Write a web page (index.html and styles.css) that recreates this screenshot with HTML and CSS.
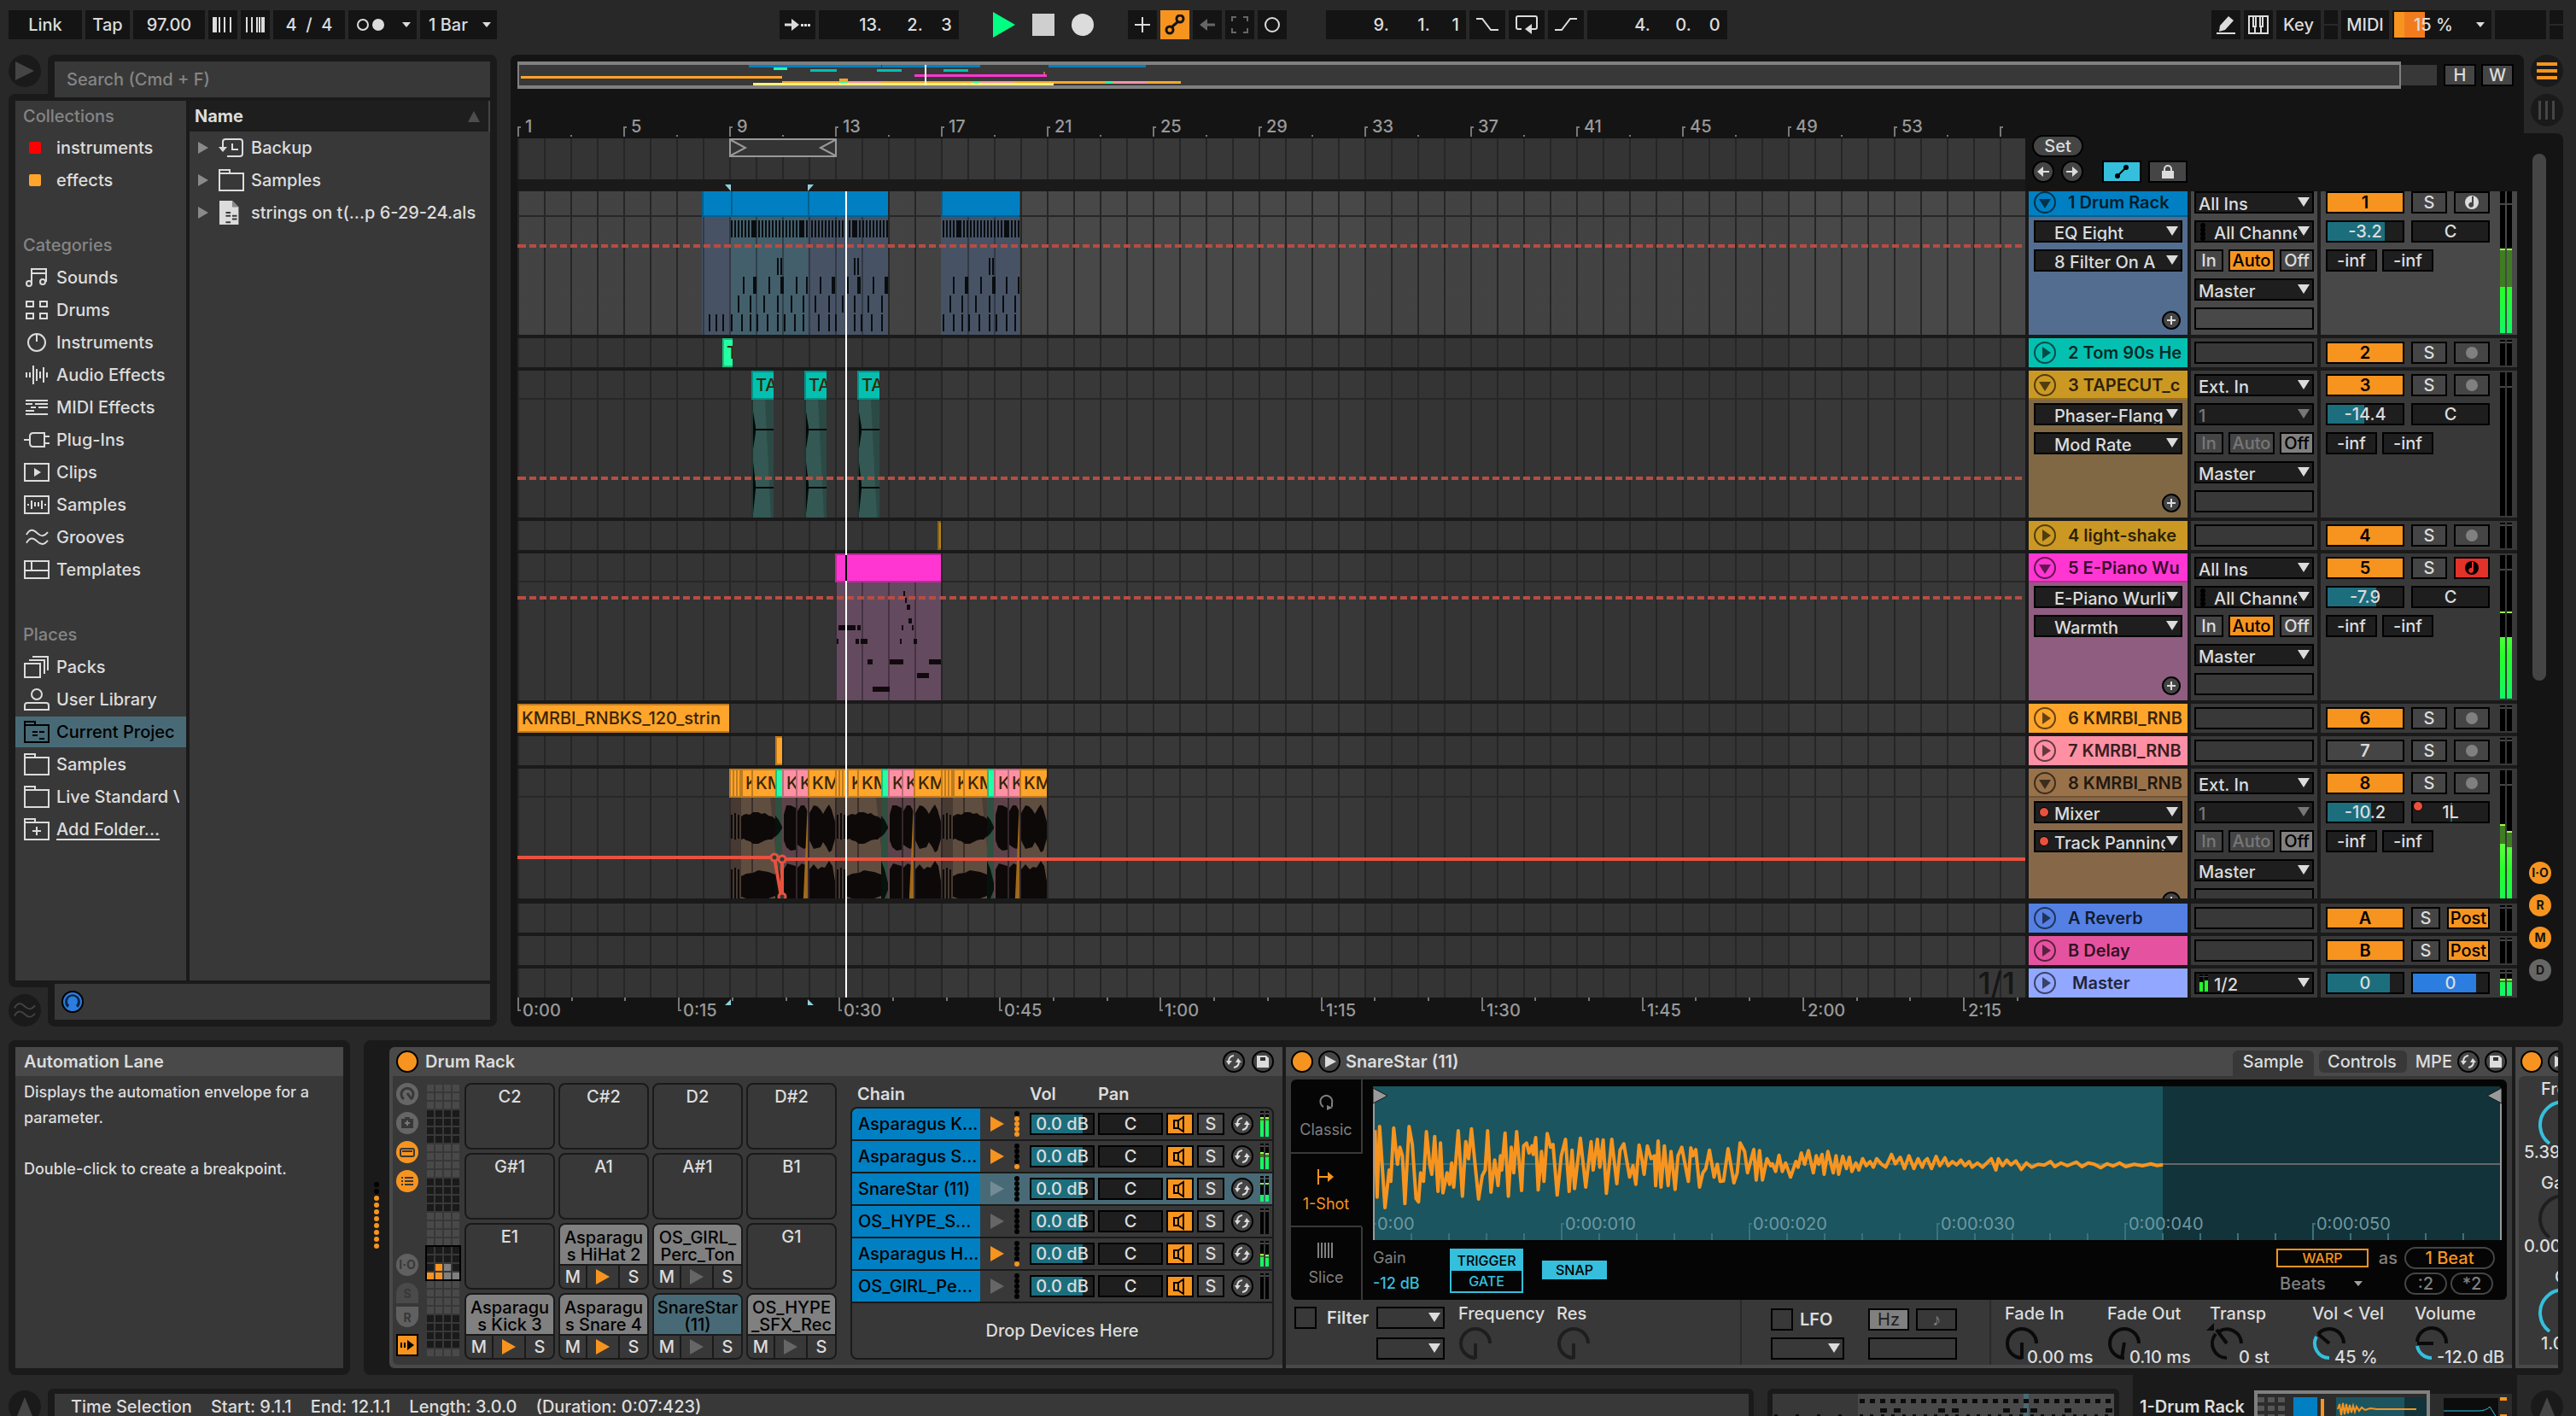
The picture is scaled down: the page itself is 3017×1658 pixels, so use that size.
FILE: index.html
```html
<!DOCTYPE html>
<html lang="en">
<head>
<meta charset="utf-8">
<title>Live Set</title>
<link rel="stylesheet" href="styles.css">
</head>
<body>
<svg class="defs" aria-hidden="true">
  <symbol id="i-folder" viewBox="0 0 30 26"><path d="M1 5V1h12v4M1 5h28v20H1z" fill="none" stroke="currentColor" stroke-width="2"/></symbol>
  <symbol id="i-swap" viewBox="0 0 26 26"><circle cx="13" cy="13" r="12" fill="#454545" stroke="#000" stroke-width="2"/><path d="M13 6a7 7 0 0 0-6 6M13 20a7 7 0 0 0 6-6" fill="none" stroke="#dcdcdc" stroke-width="2"/><path d="M4 12h7l-4 5zM15 14h7l-4-5z" fill="#dcdcdc"/></symbol>
  <symbol id="i-save" viewBox="0 0 26 26"><circle cx="13" cy="13" r="12" fill="#454545" stroke="#000" stroke-width="2"/><path d="M6 6h11l3 3v11H6z" fill="#dcdcdc"/><path d="M10 8h6v4h-6z" fill="#333"/></symbol>
  <symbol id="i-speaker" viewBox="0 0 28 22"><path d="M7 7h5v9H7zM12 7l6-4v17l-6-4" fill="none" stroke="#000" stroke-width="2"/></symbol>
  <symbol id="i-play" viewBox="0 0 16 18"><path d="M0 0l16 9-16 9z" fill="currentColor"/></symbol>
  <symbol id="i-fold" viewBox="0 0 26 26"><circle cx="13" cy="13" r="12" fill="none" stroke="currentColor" stroke-width="2"/><path d="M6 9h14l-7 11z" fill="currentColor"/></symbol>
  <symbol id="i-unfold" viewBox="0 0 26 26"><circle cx="13" cy="13" r="12" fill="none" stroke="currentColor" stroke-width="2"/><path d="M10 6v14l10-7z" fill="currentColor"/></symbol>
  <symbol id="i-note" viewBox="0 0 18 18"><circle cx="9" cy="9" r="8" fill="currentColor"/><path d="M11 2v9a3 3 0 1 1-2-2V2z" fill="var(--hole)"/></symbol>
  <symbol id="i-plus" viewBox="0 0 22 22"><circle cx="11" cy="11" r="10" fill="#454545" stroke="#000" stroke-width="2"/><path d="M11 6v10M6 11h10" stroke="#dcdcdc" stroke-width="2"/></symbol>
  <symbol id="i-waves" viewBox="0 0 28 20"><path d="M1 7c4-7 8-7 13-2s9 4 13-1M1 17c4-7 8-7 13-2s9 4 13-1" fill="none" stroke="currentColor" stroke-width="2"/></symbol>
</svg>

<div class="app">
  <header class="topbar">
    <div class="bar-group">
      <button class="tb w86">Link</button>
      <button class="tb w52">Tap</button>
      <button class="tb w84">97.00</button>
      <button class="tb w34" aria-label="Nudge down"><svg width="24" height="18"><path d="M0 0h5v18H0zM7 0h2v18H7zM13 0h2v18h-2zM20 0h2v18h-2z" fill="#dcdcdc"/></svg></button>
      <button class="tb w34" aria-label="Nudge up"><svg width="24" height="18"><path d="M1 0h2v18H1zM7 0h2v18H7zM13 0h2v18h-2zM16 0h2v18h-2zM19 0h4v18h-4z" fill="#dcdcdc"/></svg></button>
      <button class="tb w84 pre">4  /  4</button>
      <button class="tb w80 spread" aria-label="Metronome"><svg width="34" height="16"><circle cx="7" cy="8" r="6" fill="none" stroke="#dcdcdc" stroke-width="2"/><circle cx="25" cy="8" r="7" fill="#dcdcdc"/></svg><i class="caret"></i></button>
      <button class="tb w90 spread">1 Bar<i class="caret"></i></button>
    </div>
    <div class="space-l"></div>
    <div class="bar-group">
      <button class="tb w42" aria-label="Follow"><svg width="32" height="16"><path d="M1 8h9" stroke="#dcdcdc" stroke-width="3"/><path d="M9 1l9 7-9 7z" fill="#dcdcdc"/><path d="M20 7h3v3h-3zM24 7h3v3h-3zM28 7h3v3h-3z" fill="#dcdcdc"/></svg></button>
      <div class="tb w164 pos"><span>13.</span><span>2.</span><span>3</span></div>
      <div class="transport">
        <button class="bare" aria-label="Play"><svg width="26" height="30"><path d="M0 0l26 15L0 30z" fill="#00ff82"/></svg></button>
        <button class="bare" aria-label="Stop"><svg width="26" height="26"><path d="M0 0h26v26H0z" fill="#cfcfcf"/></svg></button>
        <button class="bare" aria-label="Record"><svg width="26" height="26"><circle cx="13" cy="13" r="13" fill="#dcdcdc"/></svg></button>
      </div>
      <button class="tb w34" aria-label="Overdub"><svg width="18" height="18"><path d="M9 0v18M0 9h18" stroke="#dcdcdc" stroke-width="2"/></svg></button>
      <button class="tb w34 on" aria-label="Automation arm"><svg width="24" height="24"><g fill="none" stroke="#141414" stroke-width="3"><circle cx="6" cy="18" r="4"/><circle cx="18" cy="5" r="4"/><path d="M8 15l8-7"/></g></svg></button>
      <button class="tb w34" aria-label="Re-enable automation"><svg width="18" height="16"><path d="M18 8H8" stroke="#666" stroke-width="3"/><path d="M9 1L0 8l9 7z" fill="#666"/></svg></button>
      <button class="tb w34" aria-label="Capture MIDI"><svg width="20" height="20"><path d="M1 6V1h5M14 1h5v5M19 14v5h-5M6 19H1v-5" fill="none" stroke="#666" stroke-width="2"/></svg></button>
      <button class="tb w34" aria-label="Session record"><svg width="20" height="20"><circle cx="10" cy="10" r="8" fill="none" stroke="#dcdcdc" stroke-width="2"/></svg></button>
      <div class="tb w164 pos loop-start"><span>9.</span><span>1.</span><span>1</span></div>
      <button class="tb w42" aria-label="Punch in"><svg width="28" height="16"><path d="M1 1h7l10 13h9" fill="none" stroke="#dcdcdc" stroke-width="2"/></svg></button>
      <button class="tb w42" aria-label="Loop"><svg width="28" height="24"><path d="M8 17H4q-2 0-2-2V4q0-2 2-2h20q2 0 2 2v11q0 2-2 2h-7" fill="none" stroke="#dcdcdc" stroke-width="2"/><path d="M20 11v12l-8-6z" fill="#dcdcdc"/></svg></button>
      <button class="tb w42" aria-label="Punch out"><svg width="28" height="16"><path d="M1 14h8L19 1h8" fill="none" stroke="#dcdcdc" stroke-width="2"/></svg></button>
      <div class="tb w164 pos"><span>4.</span><span>0.</span><span>0</span></div>
    </div>
    <div class="space-r"></div>
    <div class="bar-group">
      <button class="tb w34" aria-label="Draw mode"><svg width="24" height="24"><path d="M5 13L15 2l6 5-10 11-7 2zM1 21h22v2H1z" fill="#dcdcdc"/></svg></button>
      <button class="tb w34" aria-label="Computer keyboard"><svg width="24" height="22"><path d="M1 1h22v20H1zM8 12v9M15 12v9M6 1h3v12H6zM14 1h3v12h-3z" fill="none" stroke="#dcdcdc" stroke-width="2"/></svg></button>
      <button class="tb w52">Key</button>
      <div class="stack"><i></i><i></i></div>
      <button class="tb w56">MIDI</button>
      <div class="tb w116 cpu"><i class="cpu-fill"></i><span>15 %</span><i class="caret"></i></div>
      <div class="tb w60"></div>
      <div class="stack"><i></i><i></i></div>
    </div>
  </header>

  <main class="workspace">
    <aside class="browser">
      <div class="browser-top">
        <button class="round" aria-label="Preview"><svg width="22" height="22"><path d="M0 0l22 11L0 22z" fill="#454545"/></svg></button>
        <div class="search-wrap"><input class="search" type="text" aria-label="Search" placeholder="Search (Cmd + F)"></div>
      </div>
      <div class="browser-main">
        <nav class="sidebar">
          <h2>Collections</h2>
          <ul>
            <li><i class="swatch red"></i>instruments</li>
            <li><i class="swatch amber"></i>effects</li>
          </ul>
          <h2>Categories</h2>
          <ul>
            <li><svg viewBox="0 0 30 26"><g fill="none" stroke="currentColor" stroke-width="2"><circle cx="6" cy="20" r="3"/><circle cx="22" cy="18" r="3"/><path d="M9 20V3h17v15M9 8h17"/></g></svg>Sounds</li>
            <li><svg viewBox="0 0 30 26"><path d="M3 3h8v6H3zM19 3h8v6h-8zM3 17h8v6H3zM19 17h8v6h-8z" fill="none" stroke="currentColor" stroke-width="2"/></svg>Drums</li>
            <li><svg viewBox="0 0 30 26"><path d="M15 3v9" stroke="currentColor" stroke-width="2"/><circle cx="15" cy="13" r="10" fill="none" stroke="currentColor" stroke-width="2"/></svg>Instruments</li>
            <li><svg viewBox="0 0 30 26"><path d="M3 10v6M7 10v6M11 2v22M15 6v14M19 9v8M23 4v18M27 10v6" stroke="currentColor" stroke-width="2"/></svg>Audio Effects</li>
            <li><svg viewBox="0 0 30 26"><path d="M2 5h26M2 9h8M13 9h15M8 13h6M17 13h11M2 17h10M2 21h26" stroke="currentColor" stroke-width="2"/></svg>MIDI Effects</li>
            <li><svg viewBox="0 0 30 26"><path d="M0 13h7M24 9h6M24 17h6M24 5v16H11q-4 0-4-4V9q0-4 4-4z" fill="none" stroke="currentColor" stroke-width="2"/></svg>Plug-Ins</li>
            <li><svg viewBox="0 0 30 26"><path d="M1 3h28v20H1z" fill="none" stroke="currentColor" stroke-width="2"/><path d="M12 8l8 5-8 5z" fill="currentColor"/></svg>Clips</li>
            <li><svg viewBox="0 0 30 26"><path d="M1 3h28v20H1zM5 12v2M9 8v10M13 10v5M17 10v5M21 8v10M25 12v2" fill="none" stroke="currentColor" stroke-width="2"/></svg>Samples</li>
            <li><svg viewBox="0 0 30 26"><use href="#i-waves" x="2" y="3" width="27" height="20"/></svg>Grooves</li>
            <li><svg viewBox="0 0 30 26"><path d="M1 3h28v20H1zM1 14h28M9 3v11" fill="none" stroke="currentColor" stroke-width="2"/></svg>Templates</li>
          </ul>
          <h2>Places</h2>
          <ul>
            <li><svg viewBox="0 0 30 26"><path d="M1 9h18v16H1zM6 5h18v16M10 1h18v16" fill="none" stroke="currentColor" stroke-width="2"/></svg>Packs</li>
            <li><svg viewBox="0 0 30 26"><circle cx="15" cy="7" r="6" fill="none" stroke="currentColor" stroke-width="2"/><path d="M1 25v-5q0-3 3-3h22q3 0 3 3v5z" fill="none" stroke="currentColor" stroke-width="2"/></svg>User Library</li>
            <li class="current"><svg viewBox="0 0 30 26"><use href="#i-folder" width="30" height="26"/><path d="M10 13h6M18 13h6M10 17h6M18 21h6" stroke="currentColor" stroke-width="2"/></svg>Current Projec</li>
            <li><svg viewBox="0 0 30 26"><use href="#i-folder" width="30" height="26"/></svg>Samples</li>
            <li><svg viewBox="0 0 30 26"><use href="#i-folder" width="30" height="26"/></svg>Live Standard V</li>
            <li><svg viewBox="0 0 30 26"><use href="#i-folder" width="30" height="26"/><path d="M15 10v10M10 15h10" stroke="currentColor" stroke-width="2"/></svg><a href="#add">Add Folder...</a></li>
          </ul>
        </nav>
        <section class="files">
          <div class="files-head">Name<svg width="14" height="13"><path d="M7 0l7 13H0z" fill="#4d4d4d"/></svg></div>
          <ul>
            <li><svg class="tri" viewBox="0 0 12 14"><path d="M0 0l12 7-12 7z" fill="#8a8a8a"/></svg><svg class="ico" viewBox="0 0 30 26"><path d="M5 12V6q0-3 3-3h17q3 0 3 3v14q0 3-3 3H10M16 8v7h7" fill="none" stroke="currentColor" stroke-width="2"/><path d="M0 12h10l-5 6z" fill="currentColor"/></svg>Backup</li>
            <li><svg class="tri" viewBox="0 0 12 14"><path d="M0 0l12 7-12 7z" fill="#8a8a8a"/></svg><svg class="ico" viewBox="0 0 30 26"><use href="#i-folder" width="30" height="26"/></svg>Samples</li>
            <li><svg class="tri" viewBox="0 0 12 14"><path d="M0 0l12 7-12 7z" fill="#8a8a8a"/></svg><svg class="ico" viewBox="0 0 30 30"><path d="M0 0h16l8 8v22H0z" fill="#dcdcdc"/><path d="M16 0v8h8z" fill="#888"/><path d="M8 15h6M8 19h6M16 19h6M16 23h6M8 27h6" stroke="#383838" stroke-width="2"/></svg>strings on t(...p 6-29-24.als</li>
          </ul>
        </section>
      </div>
      <div class="browser-foot">
        <button class="round" aria-label="Groove pool"><svg width="26" height="20"><use href="#i-waves" width="26" height="20" color="#454545"/></svg></button>
        <div class="preview-wrap"><div class="preview"><svg width="26" height="26"><circle cx="13" cy="13" r="13" fill="#000"/><circle cx="13" cy="13" r="11" fill="#2b7de0"/><path d="M7 20a9 9 0 1 1 12 0l-2-3a6 6 0 1 0-8 0z" fill="#0b2746"/><path d="M11 24v-8H8q-1-7 5-7t5 7h-3v8z" fill="#2b7de0"/></svg></div></div>
      </div>
    </aside>

    <section class="arrange">
      <div class="arrange-body">
        <div class="overview-row">
          <div class="overview">
            <svg width="100%" height="24" id="overview"></svg>
          </div>
          <div class="overview-rest"></div>
          <button class="hw">H</button>
          <button class="hw">W</button>
        </div>
        <div class="ruler-row">
          <div class="ruler-area">
            <svg class="ruler" width="100%" height="56" id="ruler"></svg>
            <div class="scrub grid-lines"><svg class="loop" width="126" height="22"><path d="M1 1h124v20H1z" fill="#343434" stroke="#999" stroke-width="2"/><path d="M2 2l17 9-17 9M124 2l-17 9 17 9" fill="none" stroke="#999" stroke-width="2"/></svg></div>
            <svg class="marks" width="100%" height="14"><path d="M243 6h7v8zM340 6h7l-7 8z" fill="#8fd0dc"/></svg>
          </div>
          <div class="locators">
            <button class="pill">Set</button>
            <div class="loc-row">
              <button class="dot" aria-label="Previous locator"><svg width="26" height="26"><circle cx="13" cy="13" r="12" fill="#454545" stroke="#000" stroke-width="2"/><path d="M20 12v2h-7v5l-7-6 7-6v5z" fill="#dcdcdc"/></svg></button>
              <button class="dot" aria-label="Next locator"><svg width="26" height="26"><circle cx="13" cy="13" r="12" fill="#454545" stroke="#000" stroke-width="2"/><path d="M6 12v2h7v5l7-6-7-6v5z" fill="#dcdcdc"/></svg></button>
              <button class="sq cyan" aria-label="Automation mode"><svg width="18" height="18"><path d="M3 15L15 3" stroke="#000" stroke-width="2"/><circle cx="4" cy="14" r="3"/><circle cx="14" cy="4" r="3"/></svg></button>
              <button class="sq" aria-label="Lock envelopes"><svg width="16" height="16"><path d="M1 7h14v9H1z" fill="#dcdcdc"/><path d="M4 8V5a4 4 0 0 1 8 0v3" fill="none" stroke="#dcdcdc" stroke-width="2"/></svg></button>
            </div>
          </div>
        </div>
        <div class="tracks tracks-scroll" id="tracks"></div>
        <div class="tracks tracks-fixed" id="returns"></div>
        <svg class="time-ruler" width="100%" height="34" id="times"></svg>
        <div class="playhead"></div>
      </div>
      <div class="side">
        <div class="view-switch">
          <button class="round" aria-label="Arrangement view"><svg width="24" height="22"><path d="M0 1h24v4H0zM0 9h24v4H0zM0 17h24v4H0z" fill="#f7941f"/></svg></button>
          <button class="round" aria-label="Session view"><svg width="20" height="22"><path d="M0 0h3v22H0zM8 0h3v22H8zM16 0h3v22h-3z" fill="#454545"/></svg></button>
        </div>
        <div class="side-panel">
          <div class="scrollbar"></div>
          <button class="mini">I·O</button><button class="mini">R</button><button class="mini">M</button><button class="mini off">D</button>
        </div>
      </div>
    </section>
  </main>

  <section class="lower">
    <aside class="info">
      <h2>Automation Lane</h2>
      <div class="info-body">
        <p>Displays the automation envelope for a parameter.</p>
        <p>Double-click to create a breakpoint.</p>
      </div>
    </aside>
    <div class="rack">
      <svg class="rack-dots" width="6" height="80" id="rackdots"></svg>
      <article class="device drum">
        <header class="dev-head"><button class="power" aria-label="Device on"></button><h3>Drum Rack</h3><span class="grow"></span><svg width="26" height="26"><use href="#i-swap"/></svg><svg width="26" height="26"><use href="#i-save"/></svg></header>
        <div class="dev-body drum-body">
          <div class="rack-tools">
            <svg width="26" height="26"><circle cx="13" cy="13" r="13" fill="#666"/><path d="M9 19a7 7 0 1 1 8 0M13 12l5 7" fill="none" stroke="#383838" stroke-width="3"/></svg>
            <svg width="26" height="26"><circle cx="13" cy="13" r="13" fill="#666"/><path d="M6 8h4V6h6v2h4v11H6z" fill="#383838"/><path d="M13 10v6M10 13h6" stroke="#777" stroke-width="2"/></svg>
            <svg width="26" height="26"><circle cx="13" cy="13" r="13" fill="#f7941f"/><rect x="5" y="9" width="16" height="9" rx="2" fill="none" stroke="#383838" stroke-width="2"/><path d="M7 12h12" stroke="#383838" stroke-width="2"/></svg>
            <svg width="26" height="26"><circle cx="13" cy="13" r="13" fill="#f7941f"/><path d="M6 9h2M10 9h10M6 13h2M10 13h10M6 17h2M10 17h10" stroke="#383838" stroke-width="2"/></svg>
            <span class="grow"></span>
            <button class="tool">I·O</button>
            <button class="tool half-t">S</button>
            <button class="tool half-b">R</button>
            <svg width="26" height="26"><path d="M1 1h24v24H1z" fill="#f7941f" stroke="#000" stroke-width="2"/><path d="M5 10h2v6H5zM9 10h2v6H9zM13 7l8 6-8 6z"/></svg>
          </div>
          <svg class="padmap" width="42" height="324" id="padmap"></svg>
          <div class="pads" id="pads"></div>
          <div class="chains">
            <div class="chain-labels"><span>Chain</span><span>Vol</span><span>Pan</span></div>
            <div class="chain-box"><div id="chains"></div><div class="drop">Drop Devices Here</div></div>
          </div>
        </div>
      </article>
      <article class="device sampler">
        <header class="dev-head"><button class="power" aria-label="Device on"></button><svg width="26" height="26"><circle cx="13" cy="13" r="12" fill="#454545" stroke="#000" stroke-width="2"/><path d="M8 6l13 7-13 7z" fill="#dcdcdc"/></svg><h3>SnareStar (11)</h3><span class="grow"></span><button class="tab active">Sample</button><button class="tab">Controls</button><span class="mpe">MPE</span><svg width="26" height="26"><use href="#i-swap"/></svg><svg width="26" height="26"><use href="#i-save"/></svg></header>
        <div class="dev-body sampler-body">
          <div class="display">
            <div class="modes">
              <button><svg width="20" height="20"><path d="M7 15a7 7 0 1 1 10-4v4" fill="none" stroke="currentColor" stroke-width="2"/><path d="M11 13v6l7-3z" fill="currentColor"/></svg>Classic</button>
              <button class="sel"><svg width="20" height="20"><path d="M1 1v18M1 10h14" stroke="currentColor" stroke-width="2"/><path d="M12 4v12l7-6z" fill="currentColor"/></svg>1-Shot</button>
              <button><svg width="20" height="20"><path d="M1 1v18M5 1v18M9 1v18M13 1v18M17 1v18" stroke="currentColor" stroke-width="2"/></svg>Slice</button>
            </div>
            <div class="display-area">
              <svg class="wave" width="100%" height="180" id="wave"></svg>
              <div class="display-ctl">
                <div class="gain"><span>Gain</span><b>-12 dB</b></div>
                <div class="toggle2"><button class="lit">TRIGGER</button><button>GATE</button></div>
                <button class="snap">SNAP</button>
                <span class="grow"></span>
                <div class="warp">
                  <button class="warp-btn">WARP</button><span>as</span><button class="beat">1 Beat</button>
                  <button class="beats">Beats<i class="caret"></i></button><span></span><div class="halves"><button>:2</button><button>*2</button></div>
                </div>
              </div>
            </div>
          </div>
          <div class="params">
            <label class="check"><input type="checkbox"><span>Filter</span></label>
            <div class="two"><div class="pick"><select aria-label="Filter type"><option></option></select></div><div class="pick"><select aria-label="Filter slope"><option></option></select></div></div>
            <div class="knob-col"><span>Frequency</span><svg width="40" height="40"><path d="M20 37A17 17 0 1 1 37 20M20 20v18" class="kd"/></svg></div>
            <div class="knob-col"><span>Res</span><svg width="40" height="40"><path d="M20 37A17 17 0 1 1 37 20M20 20v18" class="kd"/></svg></div>
            <span class="grow"></span>
            <div class="lfo">
              <div class="lfo-a"><label class="check"><input type="checkbox"><span>LFO</span></label><div class="pick"><select aria-label="LFO shape"><option></option></select></div></div>
              <div class="lfo-b"><div class="hz"><button class="lit">Hz</button><button>♪</button></div><div class="blank"></div></div>
            </div>
            <div class="knobs">
              <div class="knob-col"><span>Fade In</span><svg width="40" height="40"><path d="M20 37A17 17 0 1 1 37 20M20 19v19" class="ko"/></svg><em>0.00 ms</em></div>
              <div class="knob-col"><span>Fade Out</span><svg width="40" height="40"><path d="M20 37A17 17 0 1 1 37 20M20 19l-3 18" class="ko"/></svg><em>0.10 ms</em></div>
              <div class="knob-col shift"><span>Transp</span><svg width="40" height="40"><path d="M20 37A17 17 0 0 1 7 9M11 6A17 17 0 0 1 37 20M20 20L8 4" class="ko"/><path d="M-4 5l9-9v9z" class="kt"/></svg><em>0 st</em></div>
              <div class="knob-col"><span>Vol &lt; Vel</span><svg width="40" height="40"><path d="M7 9A17 17 0 0 1 37 20M20 20L7 9" class="ko"/><path d="M20 37A17 17 0 0 1 5 12" class="kc"/></svg><em>45 %</em></div>
              <div class="knob-col"><span>Volume</span><svg width="40" height="40"><path d="M3 18A17 17 0 0 1 37 20M22 20H3" class="ko"/><path d="M20 37A17 17 0 0 1 3 23" class="kc"/></svg><em>-12.0 dB</em></div>
            </div>
          </div>
        </div>
      </article>
      <article class="device third">
        <header class="dev-head"><button class="power" aria-label="Device on"></button><svg width="26" height="26"><circle cx="13" cy="13" r="12" fill="#454545" stroke="#000" stroke-width="2"/><path d="M8 6l13 7-13 7z" fill="#dcdcdc"/></svg></header>
        <div class="dev-body third-body">
          <span class="t1">Freq</span><svg width="60" height="56"><path d="M14 51A27 27 0 1 1 46 51" fill="none" stroke="#35bfdd" stroke-width="4"/></svg><span class="t2">5.39 kHz</span>
          <span class="t1">Gain</span><svg width="60" height="56"><path d="M14 51A27 27 0 1 1 46 51" fill="none" stroke="#1e1e1e" stroke-width="4"/></svg><span class="t2">0.00 dB</span>
          <span class="t3">Q</span><svg width="60" height="56"><path d="M14 51A27 27 0 1 1 46 51" fill="none" stroke="#35bfdd" stroke-width="4"/></svg><span class="t1">1.00</span>
        </div>
      </article>
    </div>
  </section>

  <footer class="status">
    <button class="round" aria-label="Toggle info view"><svg width="18" height="22"><path d="M9 0l9 22H0z" fill="#454545"/></svg></button>
    <div class="status-text"><div><span>Time Selection</span><span>Start: 9.1.1</span><span>End: 12.1.1</span><span>Length: 3.0.0</span><span>(Duration: 0:07:423)</span></div></div>
    <div class="clip-view"><svg width="100%" height="40" id="clipview"></svg></div>
    <div class="dev-view"><b>1-Drum Rack</b>
      <svg width="302" height="40"><path d="M0 4h302v36H0z" fill="#2c2c2c"/><path d="M46 8h28v32H46z" fill="#0080c2"/><path d="M96 8h108v28H96z" fill="#1c5560"/><path d="M176 8h28v28h-28z" fill="#12333a"/><path d="M98 22l2-6 2 13 2-14 2 13 2-12 2 11 2-10 2 9 2-8 2 7 2-6 3 5 3-4 4 3 6-2 8 1h46" fill="none" stroke="#f7941f" stroke-width="2"/><path d="M222 9h64v31h-64z" fill="#0c0c0c"/><path d="M222 24h40q10 0 14-5l8 13" fill="none" stroke="#35bfdd"/><g fill="#555"><path d="M4 8h8v6H4zM16 8h8v6h-8zM28 8h8v6h-8zM4 18h8v6H4zM16 18h8v6h-8zM28 18h8v6h-8zM4 28h8v6H4zM16 28h8v6h-8zM28 28h8v6h-8z"/></g><path d="M78 10h4v28h-4zM288 8h8v4h-8zM288 28h8v4h-8z" fill="#f7941f"/><path d="M2 50V2h202v48" fill="none" stroke="#808080" stroke-width="4"/></svg>
    </div>
    <button class="round" aria-label="Toggle device view"><svg width="18" height="22"><path d="M9 0l9 22H0z" fill="#454545"/></svg></button>
  </footer>
</div>
<script src="script.js"></script>
</body>
</html>
```

FILE: styles.css
```css
* { box-sizing: border-box; }
body {
  margin: 0;
  background: #282828;
  color: #dcdcdc;
  font: 500 20px/26px Inter, "Liberation Sans", sans-serif;
  overflow: hidden;
}
button, input, select { font: inherit; color: inherit; border: 0; padding: 0; margin: 0; background: none; border-radius: 0; }
h2, h3, ul, p { margin: 0; padding: 0; font-size: inherit; font-weight: inherit; list-style: none; }
svg { display: block; flex: none; }
i, em { font-style: normal; }
.defs { position: absolute; width: 0; height: 0; }
.grow { flex: 1; }
.pre { white-space: pre; }
.app { padding: 12px 15px 0 10px; height: 100vh; overflow: hidden; }

/* control bar */
.topbar { display: flex; height: 34px; }
.bar-group { display: flex; gap: 4px; }
.space-l { flex: 330; }
.space-r { flex: 566; }
.tb { height: 34px; background: #141414; display: flex; align-items: center; justify-content: center; flex: none; }
.w34 { width: 34px; } .w42 { width: 42px; } .w52 { width: 52px; } .w56 { width: 56px; } .w60 { width: 60px; }
.w80 { width: 80px; } .w84 { width: 84px; } .w86 { width: 86px; } .w90 { width: 90px; } .w116 { width: 116px; } .w164 { width: 164px; }
.tb.on { background: #f7941f; }
.spread { justify-content: space-between; padding: 0 7px 0 10px; }
.pos { justify-content: flex-end; padding-right: 8px; }
.pos span { width: 48px; text-align: right; }
.pos span:last-child { width: 34px; }
.loop-start { margin-left: 42px; }
.caret { width: 0; height: 0; border: 5px solid transparent; border-top: 6px solid #dcdcdc; border-bottom: 0; }
.transport { display: flex; align-items: center; gap: 20px; padding: 0 36px; }
.bare { display: flex; }
.stack { width: 16px; display: flex; flex-direction: column; gap: 2px; }
.stack i { flex: 1; background: #141414; }
.cpu { position: relative; justify-content: space-between; padding: 0 8px 0 25px; }
.cpu-fill { position: absolute; left: 2px; top: 2px; bottom: 2px; width: 36px; background: linear-gradient(90deg, #f7941f 12px, #f27c1d 12px); }
.cpu span { position: relative; }

/* workspace */
.workspace { display: grid; grid-template-columns: 572px 1fr; gap: 16px; margin-top: 18px; }
.round { width: 38px; height: 38px; border-radius: 50%; background: #1a1a1a; display: flex; align-items: center; justify-content: center; flex: none; }
.browser { display: flex; flex-direction: column; }
.browser-top { display: flex; gap: 8px; height: 46px; }
.search-wrap { flex: 1; background: #1a1a1a; border-radius: 8px 8px 0 0; padding: 8px 8px 0; }
.search { position: relative; display: block; width: 100%; height: 42px; background: #383838; padding: 0 14px; outline: 0; }
.search::placeholder { color: #858585; opacity: 1; }
.browser-main { flex: 1; background: #1a1a1a; border-radius: 8px 0 0 8px; padding: 8px; display: grid; grid-template-columns: 200px 1fr; gap: 4px; }
.sidebar, .files { background: #383838; overflow: hidden; }
.sidebar h2 { line-height: 38px; padding-left: 9px; color: #858585; }
.sidebar h2:first-child { line-height: 36px; }
.sidebar ul + h2 { margin-top: 38px; }
.sidebar li { height: 38px; display: flex; align-items: center; gap: 8px; padding-left: 10px; margin-right: 8px; white-space: nowrap; overflow: hidden; }
.sidebar li svg { width: 30px; height: 26px; }
.sidebar li.current { background: #486a76; color: #000; margin-right: 0; padding-right: 8px; border: solid #383838; border-width: 1px 0; }
.sidebar a { color: inherit; text-underline-offset: 4px; text-decoration-thickness: 2px; }
.swatch { width: 14px; height: 14px; border-radius: 2px; margin: 0 10px 0 6px; flex: none; }
.red { background: #ff0000; } .amber { background: #ffa52b; }
.files-head { height: 36px; background: #1e1e1e; padding: 0 10px 0 6px; display: flex; align-items: center; justify-content: space-between; font-weight: 700; border-right: 2px solid #454545; }
.files li { height: 38px; display: flex; align-items: center; padding-left: 10px; white-space: nowrap; }
.files .tri { width: 12px; height: 14px; margin-right: 12px; }
.files .ico { width: 30px; height: 28px; margin-right: 8px; }
.browser-foot { display: flex; gap: 8px; height: 46px; align-items: flex-end; }
.preview-wrap { flex: 1; height: 46px; background: #1a1a1a; border-radius: 0 0 8px 8px; padding: 0 8px 8px; }
.preview { position: relative; height: 42px; margin-top: -4px; background: #383838; padding: 8px; }

.arrange { display: grid; grid-template-columns: 1fr 46px; min-width: 0; }
.arrange-body { position: relative; background: #141414; border-radius: 8px 8px 0 8px; padding: 8px 8px 0; min-width: 0; }
.overview-row { display: flex; height: 32px; align-items: center; }
.overview { flex: 1; height: 32px; background: #383838; border: solid #808080; border-width: 4px 2px; overflow: hidden; }
.overview-rest { width: 42px; height: 24px; background: #383838; margin-right: 8px; }
.hw { width: 38px; height: 26px; background: #454545; border: 2px solid #000; margin-right: 6px; line-height: 22px; }
.hw:last-child { margin-right: 4px; }
.ruler-row { display: grid; grid-template-columns: 1fr 572px; gap: 4px; height: 120px; }
.ruler-area { min-width: 0; }
.ruler text, .time-ruler text { fill: #999; font-size: 20px; }
.grid-lines {
  background-image:
    repeating-linear-gradient(90deg, #262626 0 2px, transparent 2px 31px),
    repeating-linear-gradient(90deg, rgba(0, 0, 0, .08) 0 496px, transparent 496px 992px);
}
.scrub { height: 48px; margin-top: 2px; background-color: #383838; position: relative; }
.loop { position: absolute; left: 248px; top: 0; }
.marks { background: #1a1a1a; }
.locators { padding: 54px 0 0 4px; }
.pill { display: block; width: 60px; height: 26px; border-radius: 13px; background: #454545; border: 2px solid #000; line-height: 22px; }
.loc-row { display: flex; margin-top: 4px; }
.dot { display: flex; margin-right: 8px; }
.sq { width: 46px; height: 26px; background: #454545; border: 2px solid #000; display: flex; align-items: center; justify-content: center; margin-left: 8px; }
.sq.cyan { background: #35bfdd; margin-left: 14px; }

/* tracks */
.tracks { background: #1a1a1a; overflow: hidden; }
.tracks-scroll { height: 828px; }
.tracks-scroll .track:first-child { margin-top: -4px; }
.tracks-fixed { padding-top: 6px; }
.track { display: grid; grid-template-columns: 1fr 186px 148px 230px; gap: 4px; height: 34px; margin-bottom: 4px; }
.track.open { height: 172px; }
.tracks-fixed .track:last-child { margin-bottom: 0; }
.lane { position: relative; overflow: hidden; background-color: #383838; min-width: 0; }
.track.selected .lane, .track.selected .io, .track.selected .mix { background-color: #484848; }
.open .lane::before { content: ""; position: absolute; left: 0; right: 0; top: 32px; height: 2px; background: #272727; }
.head { background: var(--b); color: rgba(0, 0, 0, .8); overflow: hidden; }
.title { height: 34px; background: var(--c); display: flex; align-items: center; padding: 0 4px 0 6px; gap: 14px; white-space: nowrap; overflow: hidden; }
.title svg { opacity: .75; }
.title b { overflow: hidden; font-weight: 600; }
.open .title { border-bottom: 2px solid rgba(0, 0, 0, .25); padding-top: 2px; }
.head .pick { margin: 4px 6px 8px; }
.pick { position: relative; height: 26px; background: #1e1e1e; border: 2px solid #000; color: #dcdcdc; display: flex; align-items: center; }
.pick::after { content: ""; position: absolute; right: 3px; top: 5px; border: 7px solid transparent; border-top: 11px solid #dcdcdc; border-bottom: 0; pointer-events: none; }
.pick select { appearance: none; width: 100%; height: 22px; outline: 0; padding: 0 18px 0 3px; opacity: 1; }
.head .pick select { padding-left: 22px; }
.pick .led { position: absolute; left: 4px; width: 12px; height: 12px; border-radius: 50%; border: 1px solid #000; background: #e9513f; }
.pick .chan { position: absolute; left: 4px; }
.pick .chan ~ select { padding-left: 21px; }
.pick.dim { color: #777; }
.pick.dim::after { border-top-color: #777; }
.add { display: block; margin: 46px 8px 0 auto; }
.io, .mix { background: #383838; padding: 4px; display: flex; flex-direction: column; gap: 8px; overflow: hidden; }
.io > * { flex: none; }
.blank { height: 26px; border: 2px solid #000; }
.trio { display: flex; gap: 6px; }
.btn { height: 26px; background: #454545; border: 2px solid #000; line-height: 22px; text-align: center; display: flex; align-items: center; justify-content: center; overflow: hidden; flex: none; }
.trio .btn:nth-child(1) { width: 34px; } .trio .btn:nth-child(2) { width: 54px; } .trio .btn:nth-child(3) { width: 40px; }
.btn.lit { background: #f7941f; color: #000; }
.btn.gray { background: #808080; color: #000; }
.btn.dim { color: #777; }
.btn.arm { background: #e3322a; color: #000; }
.mix { flex-direction: row; justify-content: space-between; padding: 0 6px; gap: 0; }
.mix-ctl { display: flex; flex-direction: column; gap: 8px; padding-top: 4px; }
.mix-row { display: flex; gap: 8px; }
.mix-row.tight { gap: 6px; }
.num { width: 92px; font-weight: 600; }
.s { width: 42px; }
.s-small { width: 34px; } .post { width: 50px; }
.val { position: relative; width: 92px; height: 26px; background: #1e1e1e; border: 2px solid #000; text-align: center; line-height: 22px; flex: none; }
.val.inf { width: 60px; }
.val i { position: absolute; left: 0; top: 0; bottom: 0; background: #1c6e7d; }
.val.blue i { background: #2b7de0; }
.val span { position: relative; }
.val .led { left: 0; top: -2px; width: 12px; height: 12px; border-radius: 50%; background: #e9513f; border: 1px solid #000; }
.val .mid { left: 44px; width: 2px; }
.meter { display: flex; gap: 2px; padding: 2px 0; }
.meter div { position: relative; width: 6px; background: #000; overflow: hidden; }
.meter div::before { content: ""; position: absolute; left: 0; right: 0; top: 2px; height: 2px; background: #454545; }
.open .meter div::before { top: 16px; }
.meter i { position: absolute; left: 0; right: 0; bottom: 0; }
.meter .hold { background: #3f7d22; border-top: 2px solid #9bff48; }
.meter .level { background: linear-gradient(0deg, #12f767, #24ff2b 50px, #7dff45 100px); }
.fold { display: flex; }

.clip { position: absolute; top: 0; bottom: 0; overflow: hidden; color: #3a2505; }
.clip .cap { height: 34px; border: solid rgba(0, 0, 0, .25); border-width: 2px 0 2px 2px; line-height: 30px; padding-left: 3px; overflow: hidden; white-space: nowrap; }
.clip svg { position: absolute; left: 0; top: 34px; }
.automation { position: absolute; left: 0; right: 0; height: 4px; background: repeating-linear-gradient(90deg, #b54d43 0 8px, transparent 8px 12px); background-position: 2px 0; }
.env { position: absolute; left: 0; top: 0; }
.zoom-label { position: absolute; right: 12px; top: -2px; font-size: 36px; line-height: 38px; color: #161616; }
.playhead { position: absolute; left: 392px; top: 160px; width: 2px; height: 944px; background: #fff; }
.now { position: absolute; left: 12px; top: 2px; width: 2px; height: 30px; background: #000; z-index: 2; }
.clip.magenta { z-index: auto; }

/* side rail */
.side { display: flex; flex-direction: column; }
.view-switch { height: 92px; padding-left: 8px; display: flex; flex-direction: column; gap: 8px; }
.side-panel { flex: 1; background: #141414; border-radius: 0 8px 8px 0; padding: 24px 14px 53px 6px; display: flex; flex-direction: column; gap: 12px; align-items: flex-end; }
.scrollbar { flex: 1; width: 16px; border-radius: 8px; background: #454545; margin: 0 6px 200px auto; }
.mini { width: 26px; height: 26px; border-radius: 50%; background: #f7941f; color: #141414; font-size: 14px; line-height: 26px; font-weight: 700; flex: none; }
.mini.off { background: #666; }

/* lower area */
.lower { display: grid; grid-template-columns: 400px 1fr; gap: 16px; height: 392px; margin-top: 16px; }
.info { background: #1a1a1a; border-radius: 8px; padding: 8px; display: flex; flex-direction: column; }
.info h2 { background: #494949; line-height: 34px; padding-left: 10px; font-weight: 600; }
.info-body { background: #383838; flex: 1; padding: 4px 10px; font-size: 18px; line-height: 30px; }
.info-body p + p { margin-top: 30px; }
.rack { background: #1a1a1a; border-radius: 8px; padding: 8px 6px 8px 12px; display: flex; min-width: 0; }
.rack-dots { align-self: center; margin: 20px 12px 0 0; }
.device { background: #494949; margin-right: 4px; display: flex; flex-direction: column; min-width: 0; }
.drum { width: 1046px; border-radius: 6px 0 0 6px; padding-left: 4px; flex: none; }
.sampler { flex: 1; }
.third { width: 50px; margin-right: 0; padding-left: 4px; overflow: hidden; flex: none; }
.dev-head { height: 34px; display: flex; align-items: center; padding: 0 10px 0 4px; gap: 8px; flex: none; }
.sampler .dev-head { padding: 0 6px; gap: 6px; }
.third .dev-head { padding: 0 2px; gap: 6px; }
.dev-head h3 { font-weight: 600; }
.power { width: 26px; height: 26px; border-radius: 50%; border: 2px solid #000; background: #f7941f; flex: none; }
.dev-body { background: #383838; flex: 1; margin-bottom: 4px; min-height: 0; }
.drum-body { display: flex; padding: 8px 10px 6px 4px; border-radius: 0 0 0 6px; }
.rack-tools { width: 26px; display: flex; flex-direction: column; gap: 8px; margin-right: 8px; padding-bottom: 4px; }
.tool { width: 26px; height: 26px; border-radius: 13px; background: #606060; color: #383838; font-size: 14px; font-weight: 700; line-height: 26px; }
.half-t { height: 24px; border-radius: 13px 13px 0 0; background: #4a4a4a; }
.half-b { height: 24px; border-radius: 0 0 13px 13px; margin-top: -4px; }
.padmap { margin-right: 4px; }
.pads { display: grid; grid-template-columns: repeat(4, 106px); grid-auto-rows: 78px; gap: 4px; margin-right: 16px; }
.pad { border: 2px solid #1a1a1a; border-radius: 8px; overflow: hidden; text-align: center; padding-top: 1px; }
.pad.full { padding: 0; display: flex; flex-direction: column; }
.pad-name { background: #808080; color: #000; height: 46px; line-height: 20px; padding-top: 4px; white-space: pre; overflow: hidden; display: block; width: 100%; flex: none; }
.pad-name.sel { background: #486a76; }
.pad-btns { display: grid; grid-template-columns: 30px 1fr 32px; gap: 2px; background: #1a1a1a; padding-top: 2px; flex: 1; }
.pad-btns button { background: #383838; display: flex; align-items: center; justify-content: center; }
.lit-play { color: #f7941f; } .dim-play { color: #666; }
.chain.sel .dim-play { color: #728b95; }
.chains { flex: 1; display: flex; flex-direction: column; }
.chain-labels { height: 28px; display: grid; grid-template-columns: 202px 80px 1fr; padding-left: 8px; font-weight: 600; }
.chain-box { flex: 1; border: 2px solid #1a1a1a; border-radius: 8px; overflow: hidden; display: flex; flex-direction: column; }
.chain { height: 38px; display: flex; align-items: center; border-bottom: 2px solid #1a1a1a; }
.chain.sel { background: #486a76; }
.chain-name { width: 150px; height: 36px; background: #0080c2; color: #000; line-height: 36px; padding-left: 7px; white-space: nowrap; overflow: hidden; text-align: left; margin-right: 12px; flex: none; }
.chain .vdots { margin: 0 12px; }
.chain .val { width: 76px; margin-right: 4px; }
.chain .btn { width: 32px; margin-right: 4px; }
.chain .swap { margin: 0 8px 0 4px; }
.chain .meter { padding: 0; height: 30px; }
.chain .meter div { width: 4px; }
.drop { flex: 1; display: flex; align-items: center; justify-content: center; }

/* sampler */
.tab { height: 26px; padding: 0 12px 0 10px; background: #383838; border-radius: 6px; }
.tab.active { padding: 0 12px 4px; height: 30px; margin-top: 4px; border-radius: 6px 6px 0 0; }
.mpe { margin: 0 0 0 4px; }
.sampler-body { padding: 4px 6px 0; display: flex; flex-direction: column; }
.display { height: 258px; background: #050505; border-radius: 6px; display: flex; flex: none; }
.modes { width: 84px; display: flex; flex-direction: column; flex: none; }
.modes button { flex: 1; display: flex; flex-direction: column; align-items: center; justify-content: center; gap: 9px; padding-top: 4px; color: #808080; border-right: 2px solid #383838; border-bottom: 2px solid #383838; font-size: 18px; font-weight: 400; }
.modes button:last-child { border-bottom: 0; }
.modes .sel { color: #f7941f; border-right-color: transparent; }
.display-area { flex: 1; padding: 8px 6px 0 12px; min-width: 0; }
.wave text { fill: #6f979f; font-size: 20px; font-weight: 400; }
.display-ctl { display: flex; padding-top: 8px; align-items: flex-start; }
.gain { width: 90px; color: #808080; font-size: 18px; display: flex; flex-direction: column; gap: 4px; font-weight: 400; }
.gain b { color: #35bfdd; font-weight: 500; }
.toggle2 { width: 86px; border: 2px solid #35bfdd; display: grid; margin: 2px 22px 0 0; color: #35bfdd; }
.toggle2 button, .snap, .warp-btn { font-size: 16px; font-weight: 500; height: 24px; line-height: 24px; }
.toggle2 .lit { background: #35bfdd; color: #000; }
.snap { width: 76px; height: 22px; line-height: 22px; background: #35bfdd; color: #000; margin-top: 16px; }
.warp { display: grid; grid-template-columns: 108px 26px 106px; column-gap: 8px; row-gap: 4px; align-items: center; color: #808080; padding-right: 8px; text-align: right; }
.warp button { text-align: center; }
.warp-btn { border: 2px solid #f7941f; color: #f7941f; height: 22px; line-height: 18px; }
.beat { height: 26px; border: 2px solid #454545; border-radius: 13px; color: #f7941f; line-height: 22px; }
.warp .beats { display: flex; justify-content: space-between; align-items: center; padding: 0 7px 0 4px; }
.beats .caret { border-top-color: #a0a0a0; }
.halves { display: flex; gap: 4px; }
.halves button { width: 50px; height: 26px; border: 2px solid #454545; border-radius: 13px; line-height: 22px; }
.params { flex: 1; display: flex; min-height: 0; }
.check { display: flex; gap: 12px; height: 26px; align-items: center; margin-top: 8px; padding-left: 4px; }
.check input { appearance: none; width: 26px; height: 26px; border: 2px solid #000; }
.check span { width: 58px; font-weight: 600; }
.two { display: flex; flex-direction: column; gap: 10px; width: 80px; margin: 8px 16px 0 0; }
.two .pick, .lfo .pick { background: #383838; }
.knob-col { position: relative; width: 115px; padding-top: 3px; white-space: nowrap; }
.knob-col svg { overflow: visible; margin-top: 2px; }
.knob-col em { position: absolute; left: 26px; top: 54px; }
.shift em { left: 34px; }
.knob-col path { fill: none; stroke-width: 4; }
.knob-col .kd { stroke: #1e1e1e; } .knob-col .ko { stroke: #0a0a0a; } .knob-col .kc { stroke: #35bfdd; }
.knob-col .kt { fill: #0a0a0a; }
.lfo { border: solid #2a2a2a; border-width: 0 2px; display: flex; gap: 28px; padding: 2px 38px 0 30px; width: 294px; margin-right: 16px; }
.lfo .check { gap: 8px; }
.lfo .check span { width: auto; }
.lfo-a .pick { margin: 8px 0 0 4px; width: 86px; }
.lfo-b { width: 104px; padding-top: 8px; }
.hz { display: flex; gap: 8px; margin-bottom: 8px; }
.hz button { width: 48px; height: 26px; border: 2px solid #000; line-height: 22px; color: #808080; font-weight: 400; }
.hz .lit { background: #808080; color: #1e1e1e; }
.knobs { display: grid; grid-template-columns: repeat(5, 120px); width: 588px; }
.third-body { padding: 2px 0 0 6px; width: 70px; border-radius: 6px 0 0 0; white-space: nowrap; }
.third-body span { display: block; }
.third-body svg { margin: 0 0 0 16px; height: 52px; }
.third-body .t1 { padding-left: 20px; }
.third-body .t3 { padding-left: 36px; }
.third-body .t2 { margin: -4px 0 10px; }

/* status */
.status { display: flex; }
.status > .round { margin-top: 18px; }
.status-text { flex: 1; margin: 16px 16px 0 8px; background: #1a1a1a; border-radius: 6px 6px 0 0; padding: 6px 6px 0 8px; }
.status-text div { background: #383838; height: 40px; padding-left: 19px; line-height: 30px; display: flex; gap: 22px; white-space: nowrap; }
.clip-view { width: 412px; margin: 16px 16px 0 0; background: #1a1a1a; border-radius: 6px 6px 0 0; padding: 6px 6px 0; }
.dev-view { width: 450px; background: #1a1a1a; margin-right: 16px; padding: 18px 6px 0 8px; display: flex; justify-content: space-between; }
.dev-view b { font-weight: 600; line-height: 38px; }
```

FILE: script.js
```js
const el = id => document.getElementById(id);
const rect = (x, y, w, h, f) => `<rect x="${x}" y="${y}" width="${w}" height="${h}" fill="${f}"/>`;
const BAR = 31;

/* bar ruler */
(() => {
  let s = '';
  for (let b = 0; b <= 56; b += 2) {
    const x = b * BAR;
    if (b % 4) { s += rect(x, 54, 2, 2, '#777'); continue; }
    s += rect(x, 44, 2, 12, '#777') + rect(x, 44, 4, 2, '#777');
    if (b < 56) s += `<text x="${x + 9}" y="51">${b + 1}</text>`;
  }
  el('ruler').innerHTML = s;
})();

/* time ruler */
(() => {
  let s = '';
  for (let i = 0; i < 29; i++) {
    const x = Math.round(i * 62.7);
    if (i % 3) { s += rect(x, 0, 2, 4, '#777'); continue; }
    const t = i * 5;
    s += rect(x, 0, 2, 14, '#777') + rect(x, 14, 4, 2, '#777');
    s += `<text x="${x + 6}" y="22">${Math.floor(t / 60)}:${String(t % 60).padStart(2, '0')}</text>`;
  }
  s += '<path d="M250 2v7h-7zM340 2v7h7z" fill="#8fd0dc"/>';
  el('times').innerHTML = s;
})();

/* overview strip */
(() => {
  const B = '#0080c2', G = '#24ffa5', T = '#04c0b1', O = '#ffa52b', P = '#ff90a4', M = '#ff36d2', Y = '#fff07a';
  const rows = [[269,155,0,B],[425,115,0,B],[620,114,0,B],[298,16,3,G],[341,31,5,T],[419,29,5,T],[497,29,5,T],
    [614,2,8,'#a8791d'],[463,155,11,M],[2,306,13,O],[375,10,16,O],[308,467,19,O],[376,8,19,G],[386,39,19,P],
    [531,9,19,G],[541,38,19,P],[686,9,19,G],[696,40,19,P],[274,352,21,Y]];
  el('overview').innerHTML = rows.map(r => rect(r[0], r[2], r[1], 3, r[3])).join('') + rect(475, 0, 2, 24, '#fff');
})();

/* clips drawn in the lanes */
const clip = (x, w, color, label, body = '', cls = '') =>
  `<div class="clip ${cls}" style="left:${x}px;width:${w}px"><div class="cap" style="background:${color}">${label}</div>${body}</div>`;
const svg = (w, h, inner, bg) => `<svg width="${w}" height="${h}" style="background:${bg}">${inner}</svg>`;
const barLines = (x, w, h) => {
  let s = '';
  for (let b = 0; b < 57; b++) if (b * BAR > x && b * BAR < x + w) s += rect(b * BAR - x, 0, 2, h, 'rgba(0,0,0,.3)');
  return s;
};
const drumNotes = (() => {
  const out = [];
  const put = (list, y) => list.forEach(n => out.push([Math.abs(n) / 3 + 194, y, n < 0 ? 4 : 2]));
  const hats = (a, b) => { for (let x = a; x < b; x += 12) out.push([x / 3 + 194, 4, 2]); };
  hats(168, 438); hats(450, 720); hats(912, 1182);
  put([-240, -414, -594, -960, -1134], 4);
  put([330, 342, 600, 612, 1074, 1086], 48);
  put([210, -246, 300, -342, 396, 432, 480, -522, 576, -612, 666, -708, 948, -990, 1044, -1086, 1134, 1176], 70);
  put([192, 234, 282, 330, 378, 420, 462, 510, 558, 600, 648, 696, 936, 978, 1026, 1074, 1122, 1164], 92);
  put([90, 114, 138, 168, 204, 234, 258, 294, 330, 354, 390, 420, 474, 510, 534, 600, 624, 660, 696, 912, 948, 978, 1002, 1038, 1074, 1098, 1134, 1164], 114);
  return out;
})();
const drumClip = (x, w, bg) => clip(x, w, '#0080c2', '',
  svg(w, 138, barLines(x, w, 138) + drumNotes.filter(n => n[0] >= x && n[0] < x + w).map(n => rect(n[0] - x, n[1], n[2], 20, '#090d10')).join(''), bg));
const tape = x => clip(x, 26, '#04c0b1', 'TA',
  svg(26, 138, '<path d="M16 0h10v138h-3z" fill="#2c4a45"/><path d="M2 14l3 18v6l-3 20zM2 73l3 26v6l-3 28z" fill="#050808"/>' + rect(4, 34, 22, 2, '#050808') + rect(4, 102, 22, 2, '#050808') + rect(0, 0, 2, 138, '#23342f'), '#345853'));
const keys = (() => {
  const n = [[546,606,249],[612,624,249],[540,546,292],[606,618,292],[624,648,292],[648,666,357],[726,774,357],[864,906,357],[822,864,400],[666,726,443],[774,780,141],[780,786,162],[786,798,184],[792,804,227],[768,774,249],[804,810,249],[762,768,292],[810,822,292]];
  const body = n.map(a => rect((a[0] - 534) / 3, Math.round(a[2] / 2.7034) - 42, (a[1] - a[0]) / 3, 6, '#100a0f')).join('');
  return clip(372, 124, '#ff36d2', '<i class="now"></i>', svg(124, 138, barLines(372, 124, 138) + body + rect(0, 0, 2, 138, '#3a2c37'), '#644a5e'));
})();

/* sliced audio clips on track 8, one four-bar pattern repeated */
const shape = (pts, color) => {
  const up = pts.map(p => `${p[0]},${p[1]}`), down = pts.slice().reverse().map(p => `${p[0]},${p[2]}`);
  return `<polygon points="${up.concat(down).join(' ')}" fill="${color}"/>`;
};
const slices = x => {
  const K = '#0d0908', O = '#ffa52b', P = '#ff90a4', G = '#24ffa5';
  const body = rect(54, 0, 8, 138, '#2f5041') + rect(62, 0, 32, 138, '#5d4349') +
    rect(0, 0, 14, 138, '#463a32') + rect(26, 0, 2, 138, '#3a302a') + rect(78, 0, 2, 138, '#32272a') + rect(92, 0, 2, 138, '#32272a') + rect(0, 0, 2, 138, '#32272a') +
    '<path d="M48 0h6v60z" fill="#4a3d34"/>' +
    rect(2, 20, 2, 28, K) + rect(6, 18, 2, 31, K) + rect(10, 20, 2, 28, K) + rect(2, 84, 2, 34, K) + rect(6, 82, 2, 36, K) + rect(10, 84, 2, 34, K) +
    shape([[14,22,49],[17,20,48],[20,19,50],[24,20,51],[28,17,54],[34,17,54],[38,19,52],[42,18,50],[46,21,49],[50,22,49],[54,25,45]], K) +
    shape([[54,21,46],[58,26,42],[62,34,36]], '#06120c') +
    shape([[64,20,50],[67,9,58],[72,9,62],[78,12,61]], K) + shape([[80,16,55],[84,9,58],[88,9,60],[92,16,58]], K) +
    shape([[94,18,50],[99,9,60],[103,10,59],[107,14,58],[110,19,52],[114,12,58],[117,8,64],[120,14,62],[124,28,48]], K) +
    shape([[14,92,116],[20,89,118],[28,88,118],[34,85,118],[46,87,118],[54,90,115]], K) +
    shape([[54,74,118],[58,84,118],[62,100,108]], '#06120c') +
    shape([[64,84,118],[68,77,118],[78,80,118]], K) + shape([[80,82,118],[85,77,118],[92,80,118]], K) +
    shape([[94,84,118],[99,78,118],[104,84,118],[108,81,118],[112,82,118],[117,74,118],[121,80,118],[124,98,118]], K) +
    '<path d="M92 4v134h-6z" fill="#a0691c"/>';
  const caps = [[0,4,O,''],[4,4,O,''],[8,4,O,''],[12,2,O,''],[14,12,O,'K'],[26,28,O,'KM'],[54,8,G,''],[62,16,P,'K'],[78,14,P,'K'],[92,32,O,'KM']];
  return `<div class="clip" style="left:${x}px;width:124px">${svg(124, 138, body, '#5f4e40')}</div>` + caps.map(c => clip(x + c[0], c[1], c[2], c[3])).join('');
};

/* track rows */
const pick = (text, { dim = false, led = false, chan = '' } = {}) =>
  `<div class="pick ${dim ? 'dim' : ''}">${led ? '<i class="led"></i>' : ''}${chan}<select aria-label="${text}"><option>${text}</option></select></div>`;
const chanDots = '<svg class="chan" width="8" height="22"><g fill="#000"><circle cx="4" cy="4" r="3"/><circle cx="4" cy="9" r="3"/><circle cx="4" cy="14" r="3"/><circle cx="4" cy="19" r="3"/></g></svg>';
const miniMeter = '<svg class="chan" width="10" height="20"><path d="M0 0h4v20H0zM6 0h4v20H6z"/><path d="M0 9h4v11H0zM6 7h4v13H6z" fill="#24ff2b"/><path d="M0 2h10v1H0z" fill="#454545"/></svg>';
const meter = m => `<div class="meter">${[0, 1].map(i => `<div>${m ? `<i class="hold" style="height:${m[i][0]}px"></i>${m[i][2] ? `<i style="height:${m[i][0] - 2}px;background:#000"></i>` : ''}<i class="level" style="height:${m[i][1]}px"></i>` : ''}</div>`).join('')}</div>`;
const mixRow = t => {
  const num = `<button class="btn num ${t.muted ? '' : 'lit'}">${t.n}</button>`;
  if (t.kind === 'return') return num + '<button class="btn s-small">S</button><button class="btn lit post">Post</button>';
  const rec = t.midi ? `<svg width="18" height="18" style="--hole:${t.armed ? '#e3322a' : '#454545'}"><use href="#i-note"/></svg>` : '<svg width="16" height="16"><circle cx="8" cy="8" r="7" fill="#808080"/></svg>';
  return num + `<button class="btn s">S</button><button class="btn s ${t.armed ? 'arm' : ''}" aria-label="Arm">${rec}</button>`;
};
const track = t => {
  const io = !t.open ? (t.kind === 'master' ? pick('1/2', { chan: miniMeter }) : '<div class="blank"></div>')
    : pick(t.midi ? 'All Ins' : 'Ext. In') +
      (t.midi ? pick('All Channels', { chan: chanDots }) : pick('1', { dim: true })) +
      `<div class="trio">${t.midi ? '<button class="btn">In</button><button class="btn lit">Auto</button><button class="btn">Off</button>'
        : '<button class="btn dim">In</button><button class="btn dim">Auto</button><button class="btn gray">Off</button>'}</div>` +
      pick('Master') + '<div class="blank"></div>';
  const mix = t.kind === 'master'
    ? '<div class="mix-row"><div class="val"><i style="width:83%"></i><span>0</span></div><div class="val blue"><i style="width:84%"></i><span>0</span></div></div>'
    : `<div class="mix-row">${mixRow(t)}</div>` + (t.open
      ? `<div class="mix-row"><div class="val"><i style="width:${t.fill}%"></i><span>${t.vol}</span></div><div class="val">${t.pan === '1L' ? '<i class="mid"></i><i class="led"></i>' : ''}<span>${t.pan}</span></div></div>
         <div class="mix-row tight"><div class="val inf"><span>-inf</span></div><div class="val inf"><span>-inf</span></div></div>` : '');
  return `<div class="track ${t.open ? 'open' : ''} ${t.selected ? 'selected' : ''}">
    <div class="lane grid-lines">${t.lane || ''}</div>
    <div class="head" style="--c:${t.c};--b:${t.b || t.c}"><div class="title"><button class="fold" aria-label="Fold track"><svg width="26" height="26"><use href="#${t.open ? 'i-fold' : 'i-unfold'}"/></svg></button><b>${t.name}</b></div>
      ${t.open ? pick(t.d1, { led: t.led }) + pick(t.d2, { led: t.led }) + '<svg class="add" width="22" height="22"><use href="#i-plus"/></svg>' : ''}</div>
    <div class="io">${io}</div>
    <div class="mix"><div class="mix-ctl">${mix}</div>${meter(t.meter)}</div>
  </div>`;
};
const dash = y => `<div class="automation" style="top:${y}px"></div>`;
el('tracks').innerHTML = [
  { n: 1, name: '1 Drum Rack', open: 1, selected: 1, midi: 1, c: '#0080c2', b: '#526d8f', d1: 'EQ Eight', d2: '8 Filter On A', vol: '-3.2', fill: 76, pan: 'C', meter: [[99, 54], [99, 54]],
    lane: drumClip(216, 34, '#475365') + drumClip(250, 90, '#435f6c') + drumClip(340, 94, '#475365') + drumClip(496, 92, '#475365') + dash(66) },
  { n: 2, name: '2 Tom 90s He', c: '#04c0b1', lane: clip(240, 12, '#24ffa5', 'T') },
  { n: 3, name: '3 TAPECUT_c', open: 1, c: '#cb9923', b: '#7f6843', d1: 'Phaser-Flang', d2: 'Mod Rate', vol: '-14.4', fill: 49, pan: 'C', lane: tape(274) + tape(336) + tape(398) + dash(124) },
  { n: 4, name: '4 light-shake', c: '#cb9923', lane: clip(492, 4, '#b5841f', '') },
  { n: 5, name: '5 E-Piano Wu', open: 1, midi: 1, armed: 1, c: '#ff36d2', b: '#8f5d80', d1: 'E-Piano Wurli', d2: 'Warmth', vol: '-7.9', fill: 65, pan: 'C', meter: [[102, 72, 1], [102, 72, 1]], lane: keys + dash(50) },
  { n: 6, name: '6 KMRBI_RNB', c: '#ffa52b', lane: clip(0, 248, '#ffa52b', 'KMRBI_RNBKS_120_strin') },
  { n: 7, name: '7 KMRBI_RNB', muted: 1, c: '#ff90a4', lane: clip(302, 8, '#ffa52b', '') },
  { n: 8, name: '8 KMRBI_RNB', open: 1, led: 1, c: '#99724a', b: '#866849', d1: 'Mixer', d2: 'Track Panning', vol: '-10.2', fill: 58, pan: '1L', meter: [[105, 82], [97, 78]],
    lane: slices(248) + slices(372) + slices(496) + '<svg class="env" width="100%" height="152"><path d="M0 104h301M301 104l8 46M310 150v-44M310 106h2000" fill="none" stroke="#e9513f" stroke-width="4"/><g fill="#383838" stroke="#e9513f" stroke-width="3"><circle cx="301" cy="104" r="4"/><circle cx="310" cy="106" r="4"/><circle cx="310" cy="150" r="4"/></g></svg>' },
].map(track).join('');
el('returns').innerHTML = [
  { n: 'A', name: 'A Reverb', kind: 'return', c: '#5480e4' },
  { n: 'B', name: 'B Delay', kind: 'return', c: '#e553a0' },
  { name: '&nbsp;Master', kind: 'master', c: '#92a7ff', meter: [[20, 16], [20, 16]], lane: '<span class="zoom-label">1/1</span>' },
].map(track).join('');

/* drum rack */
(() => {
  let s = '';
  for (let r = 0; r < 32; r++) for (let c = 0; c < 4; c++) {
    const dark = (r >= 3 && r < 7) || (r >= 11 && r < 15) || (r >= 19 && r < 23) || (r >= 27 && r < 31);
    let f = dark ? '#1a1a1a' : '#494949';
    if (r === 21 && c === 1 || r === 22 && c < 2) f = '#f7941f';
    if (r === 21 && c === 2 || r === 22 && c > 1) f = '#808080';
    s += rect(2 + c * 10, 2 + r * 10, 8, 8, f);
  }
  el('padmap').innerHTML = s + '<path d="M1 191h40v40H1z" fill="none" stroke="#000" stroke-width="2"/>';
  const pads = ['C2', 'C#2', 'D2', 'D#2', 'G#1', 'A1', 'A#1', 'B1', 'E1', ['Asparagu\ns HiHat 2', 1], ['OS_GIRL_\nPerc_Ton', 0], 'G1',
    ['Asparagu\ns Kick 3', 1], ['Asparagu\ns Snare 4', 1], ['SnareStar\n(11)', 0, 1], ['OS_HYPE\n_SFX_Rec', 0]];
  el('pads').innerHTML = pads.map(p => typeof p === 'string' ? `<div class="pad">${p}</div>` :
    `<div class="pad full"><button class="pad-name ${p[2] ? 'sel' : ''}">${p[0]}</button><div class="pad-btns"><button>M</button><button class="${p[1] ? 'lit-play' : 'dim-play'}" aria-label="Play pad"><svg width="16" height="18"><use href="#i-play"/></svg></button><button>S</button></div></div>`).join('');
  const dots = (n, on, gap) => Array.from({ length: n }, (_, i) => `<circle cx="3" cy="${3 + i * gap}" r="3" fill="${i >= n - on ? '#f7941f' : '#000'}"/>`).join('');
  el('rackdots').innerHTML = dots(10, 8, 8);
  const chains = [['Asparagus K...', 4, 1, [[23, 19], [23, 19]]], ['Asparagus S...', 1, 1, [[20, 14], [19, 14]]], ['SnareStar (11)', 0, 0, [[22, 8, 1], [22, 8, 1]]],
    ['OS_HYPE_S...', 0, 0], ['Asparagus H...', 1, 1, [[15, 11], [14, 10]]], ['OS_GIRL_Pe...', 0, 0]];
  el('chains').innerHTML = chains.map((c, i) => `<div class="chain ${i === 2 ? 'sel' : ''}"><button class="chain-name">${c[0]}</button>
    <svg width="16" height="18" class="${c[2] ? 'lit-play' : 'dim-play'}"><use href="#i-play"/></svg><svg class="vdots" width="6" height="30">${dots(5, c[1], 6)}</svg>
    <div class="val"><i style="width:83%"></i><span>0.0 dB</span></div><div class="val"><span>C</span></div>
    <button class="btn lit" aria-label="Chain activator"><svg width="28" height="22"><use href="#i-speaker"/></svg></button><button class="btn">S</button>
    <svg class="swap" width="26" height="26"><use href="#i-swap"/></svg>${meter(c[3])}</div>`).join('');
})();

/* sample display */
(() => {
  const a = [228,340,233,575,239,327,252,612,262,480,266,520,273,332,282,460,288,400,294,430,300,598,310,327,318,390,327,580,333,592,338,490,345,520,352,345,360,460,365,495,372,362,380,555,386,385,392,560,402,490,408,530,413,455,418,540,429,342,439,572,447,380,454,440,461,335,478,582,487,500,494,480,500,342,508,558,517,445,525,535,531,430,534,480,542,350,550,572,557,400,563,490,570,345,582,552,587,395,594,385,600,420,607,395,610,425,616,366,622,550,630,415,636,520,644,352,652,400,658,390,668,568,678,430,688,372,697,555,704,410,710,545,724,368,737,540,750,380,755,480,765,372,771,470,779,374,787,562,800,372,812,528,820,410,829,388,843,505,851,465,858,530,866,392,872,435,878,495,886,395,895,440,903,430,906,535,912,378,919,540,927,395,936,535,943,415,953,548,960,430,969,400,985,520,991,402,996,430,1003,408,1012,540,1020,490,1027,475,1036,410,1047,505,1055,460,1062,520,1070,518,1081,405,1095,525,1103,490,1110,385,1121,415,1128,490,1143,408,1149,515,1157,412,1164,515,1175,440,1184,465,1188,458,1196,485,1204,428,1212,485,1220,455,1232,505,1245,450,1250,470,1258,420,1266,460,1275,412,1287,490,1294,430,1300,460,1308,425,1313,495,1322,415,1335,490,1342,430,1348,495,1358,432,1367,475,1374,435,1380,485,1390,455,1397,480,1406,440,1415,465,1424,450,1432,470,1440,440,1452,460,1462,470,1476,425,1485,458,1497,435,1507,475,1518,430,1530,475,1540,440,1550,470];
  const b = [8,450,15,440,25,475,36,432,45,465,57,437,65,465,75,450,85,462,95,445,105,465,115,450,122,470,135,455,147,470,168,440,179,480,185,440,195,465,205,445,215,462,227,448,240,478,252,455,265,470,280,460,295,463,310,450,320,468,335,455,350,465,372,452,385,468,400,455,415,460,430,472,445,458,460,466,475,455,490,468,510,460,530,465,550,458,565,464,579,461];
  const pts = [];
  for (let i = 0; i < a.length; i += 2) pts.push(`${(a[i] / 2.0632 - 108).toFixed(1)},${((a[i + 1] - 186) / 3).toFixed(1)}`);
  for (let i = 0; i < b.length; i += 2) pts.push(`${(b[i] / 2.0443 + 642).toFixed(1)},${((b[i + 1] - 186) / 3).toFixed(1)}`);
  let s = rect(0, 0, 925, 180, '#1a5560') + rect(925, 0, 395, 180, '#12333a') + rect(0, 90, 925, 2, '#3d7079');
  s += `<polyline points="${pts.join(' ')}" fill="none" stroke="#f7941f" stroke-width="4" stroke-linejoin="round"/>` + rect(925, 90, 395, 2, '#666');
  for (let i = 0; i < 30; i++) {
    const x = Math.round(i * 44);
    s += i % 5 ? rect(x, 172, 2, 8, '#3d7079') : rect(x, 160, 2, 20, '#3d7079') + rect(x, 160, 4, 2, '#3d7079') + `<text x="${x + 5}" y="168">0:00${i ? ':0' + i * 2 : ''}</text>`;
  }
  s += rect(0, 2, 2, 178, '#999') + rect(1320, 2, 2, 178, '#999') + '<path d="M0 2l17 9-17 9zM1322 2l-17 9 17 9z" fill="#999" stroke="#1a1a1a"/>';
  el('wave').innerHTML = s;
})();

/* clip thumbnail */
(() => {
  let s = rect(0, 0, 400, 40, '#383838') + rect(100, 0, 300, 40, '#494949') + rect(294, 0, 6, 26, '#486a76');
  for (let x = 102; x < 396; x += 12) s += rect(x, 6, 6, 5, '#0c0c0c');
  [126, 142, 194, 210, 270, 290, 302, 342, 390].forEach(x => { s += rect(x, 17, 8, 5, '#0c0c0c'); });
  for (let x = 2; x < 396; x += 25) s += rect(x, 24, 4, 5, '#0c0c0c') + rect(x + 112, 24, 4, 5, '#0c0c0c');
  el('clipview').innerHTML = s;
})();
```
